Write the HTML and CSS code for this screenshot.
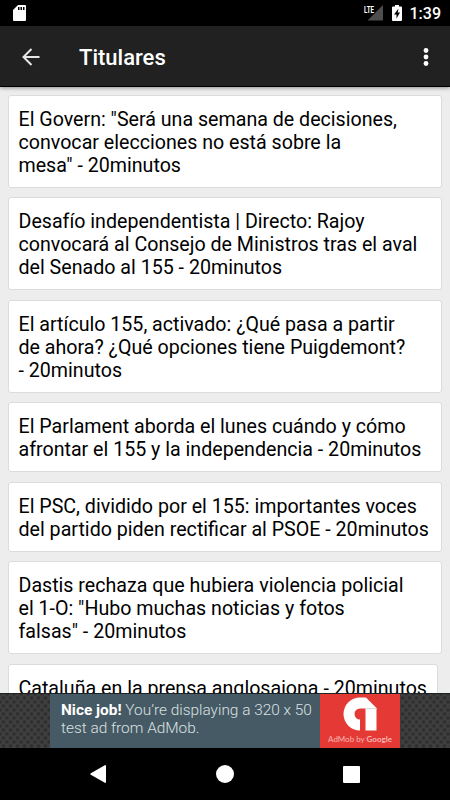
FILE: index.html
```
<!DOCTYPE html>
<html lang="es">
  <head>
    <title>Titulares</title>
    <meta charset="utf-8" />
    <meta name="viewport" content="width=device-width, initial-scale=1.0" />
    <link rel="stylesheet" href="styles.css">
  </head>

  <body>
    <div class="status">
      <svg class="sd" width="13" height="16" viewBox="0 0 13 16">
        <path fill="#fff" d="M5 0h7a1 1 0 0 1 1 1v14a1 1 0 0 1-1 1H1a1 1 0 0 1-1-1V5z" />
        <path fill="#000" d="M5 2h1.500v3H5zM7.500 2H9v3H7.500zM10 2h1.500v3H10z" />
      </svg>
      <svg class="signal" width="20" height="17" viewBox="0 0 20 17">
        <path fill="#4d4d4d" d="M20 1v15.500H4.500z" />
        <path fill="#000" d="M0 0h12v9.500H0z" />
        <text x="1" y="8.5" textLength="10" lengthAdjust="spacingAndGlyphs">LTE</text>
      </svg>
      <svg class="battery" width="10" height="16" viewBox="0 0 10 16">
        <path fill="#fff" d="M3 0h4v1.500h2a1 1 0 0 1 1 1V15a1 1 0 0 1-1 1H1a1 1 0 0 1-1-1V2.500a1 1 0 0 1 1-1h2z" />
        <path fill="#000" d="M6.500 3.500L2 9.500h2.500v4L8 7.500H5.700z" />
      </svg>
      <span class="clock">1:39</span>
    </div>

    <header class="toolbar">
      <svg class="back" width="19" height="18" viewBox="0 0 19 18">
        <path fill="none" stroke="#e6e6e6" stroke-width="2" d="M17.500 9H1.500M9.500 1l-8 8 8 8" />
      </svg>
      <h1>Titulares</h1>
      <svg class="more" width="6" height="20" viewBox="0 0 6 20">
        <circle cx="3" cy="3.500" r="2.400" />
        <circle cx="3" cy="10" r="2.400" />
        <circle cx="3" cy="16.500" r="2.400" />
      </svg>
    </header>

    <main class="list">
      <div class="card">El Govern: "Será una semana de decisiones,<br>convocar elecciones no está sobre la<br>mesa" - 20minutos</div>
      <div class="card">Desafío independentista | Directo: Rajoy<br>convocará al Consejo de Ministros tras el aval<br>del Senado al 155 - 20minutos</div>
      <div class="card">El artículo 155, activado: ¿Qué pasa a partir<br>de ahora? ¿Qué opciones tiene Puigdemont?<br>- 20minutos</div>
      <div class="card">El Parlament aborda el lunes cuándo y cómo<br>afrontar el 155 y la independencia - 20minutos</div>
      <div class="card">El PSC, dividido por el 155: importantes voces<br>del partido piden rectificar al PSOE - 20minutos</div>
      <div class="card">Dastis rechaza que hubiera violencia policial<br>el 1-O: "Hubo muchas noticias y fotos<br>falsas" - 20minutos</div>
      <div class="card last">Cataluña en la prensa anglosajona - 20minutos</div>
    </main>

    <div class="ad">
      <div class="ad-text"><b>Nice job!</b> You’re displaying a 320 x 50<br>test ad from AdMob.</div>
      <div class="ad-logo">
        <svg width="34" height="34" viewBox="0 0 34 34">
          <path fill="#fff" d="M17 33.500A16.500 16.500 0 0 1 17 .5h6L33.500 11v22.500H22.500V11.500H17a5.500 5.500 0 0 0 0 11z" />
          <path fill="#dcdcdc" d="M22.500 11h11v1.200h-11z" />
        </svg>
        <span>AdMob by <b>Google</b></span>
      </div>
    </div>

    <nav class="navbar">
      <svg width="16" height="18" viewBox="0 0 16 18">
        <path fill="#fff" d="M14.800.2Q16-.3 16 1v16q0 1.300-1.200.8L.8 9.800q-1-.8 0-1.600z" />
      </svg>
      <svg width="18" height="18" viewBox="0 0 18 18">
        <circle cx="9" cy="9" r="9" fill="#fff" />
      </svg>
      <svg width="17" height="17" viewBox="0 0 17 17">
        <rect width="17" height="17" rx="1" fill="#fff" />
      </svg>
    </nav>
  </body>
</html>
```

FILE: styles.css
```
body {
  display: flex;
  flex-direction: column;
  width: 450px;
  height: 800px;
  margin: 0;
  overflow: hidden;
  background-color: #ededed;
  font-family: Roboto, sans-serif;
}

svg {
  display: block;
  flex: none;
}

.status {
  display: flex;
  flex: none;
  height: 26px;
  box-sizing: border-box;
  padding: 5px 9px 0 13px;
  background-color: #000;
  color: #fff;
}

.signal {
  margin: -1px 9px 0 auto;
}

.signal text {
  fill: #fff;
  font-size: 9.5px;
  font-weight: bold;
}

.clock {
  margin-left: 8px;
  font-size: 16px;
  font-weight: 500;
  line-height: 18px;
}

.toolbar {
  display: flex;
  flex: none;
  align-items: center;
  height: 61px;
  box-sizing: border-box;
  padding: 1px 21px 0 22px;
  border-bottom: 1px solid #000;
  background-color: #212121;
  box-shadow: 0 1px 4px rgba(0, 0, 0, 0.4);
  z-index: 1;
}

h1 {
  margin: 2px 0 0 38px;
  color: #fff;
  font-size: 22px;
  font-weight: 500;
  line-height: 26px;
}

.more {
  margin-left: auto;
  fill: #fff;
}

.list {
  display: flex;
  flex: 1;
  flex-direction: column;
  gap: 9.6px;
  min-height: 0;
  padding: 7.5px 8px 0;
  overflow: hidden;
}

.card {
  flex: none;
  padding: 12px 9px 10px 9.5px;
  border: 1px solid #dcdcdc;
  border-radius: 3px;
  background-color: #fff;
  color: #000;
  font-size: 19.64px;
  line-height: 23px;
  white-space: nowrap;
}

.last {
  margin-right: 4px;
}

.ad {
  display: flex;
  flex: none;
  justify-content: center;
  height: 55px;
  box-sizing: border-box;
  border-top: 1px solid #1c2326;
  background-color: #3f3f3f;
  background-image: radial-gradient(circle, #2e2e2e 1px, transparent 2.4px), radial-gradient(circle, #2e2e2e 1px, transparent 2.4px);
  background-position: 0 0, 3.5px 4px;
  background-size: 7px 8px;
}

.ad-text {
  width: 270px;
  box-sizing: border-box;
  padding: 7px 0 0 11px;
  background-color: #455a64;
  color: #dce1e3;
  font-size: 15.4px;
  font-weight: 300;
  line-height: 18px;
  white-space: nowrap;
}

.ad-text b {
  color: #fff;
  font-weight: 700;
}

.ad-logo {
  display: flex;
  flex-direction: column;
  align-items: center;
  width: 80px;
  padding-top: 3px;
  box-sizing: border-box;
  background-color: #e53935;
}

.ad-logo span {
  margin-top: 2px;
  color: #f7b5b3;
  font-family: Lato, sans-serif;
  font-size: 8px;
  line-height: 12px;
  white-space: nowrap;
}

.ad-logo b {
  font-weight: 700;
}

.navbar {
  display: flex;
  flex: none;
  align-items: center;
  justify-content: space-between;
  height: 52px;
  box-sizing: border-box;
  padding: 0 90px;
  background-color: #000;
}
```
